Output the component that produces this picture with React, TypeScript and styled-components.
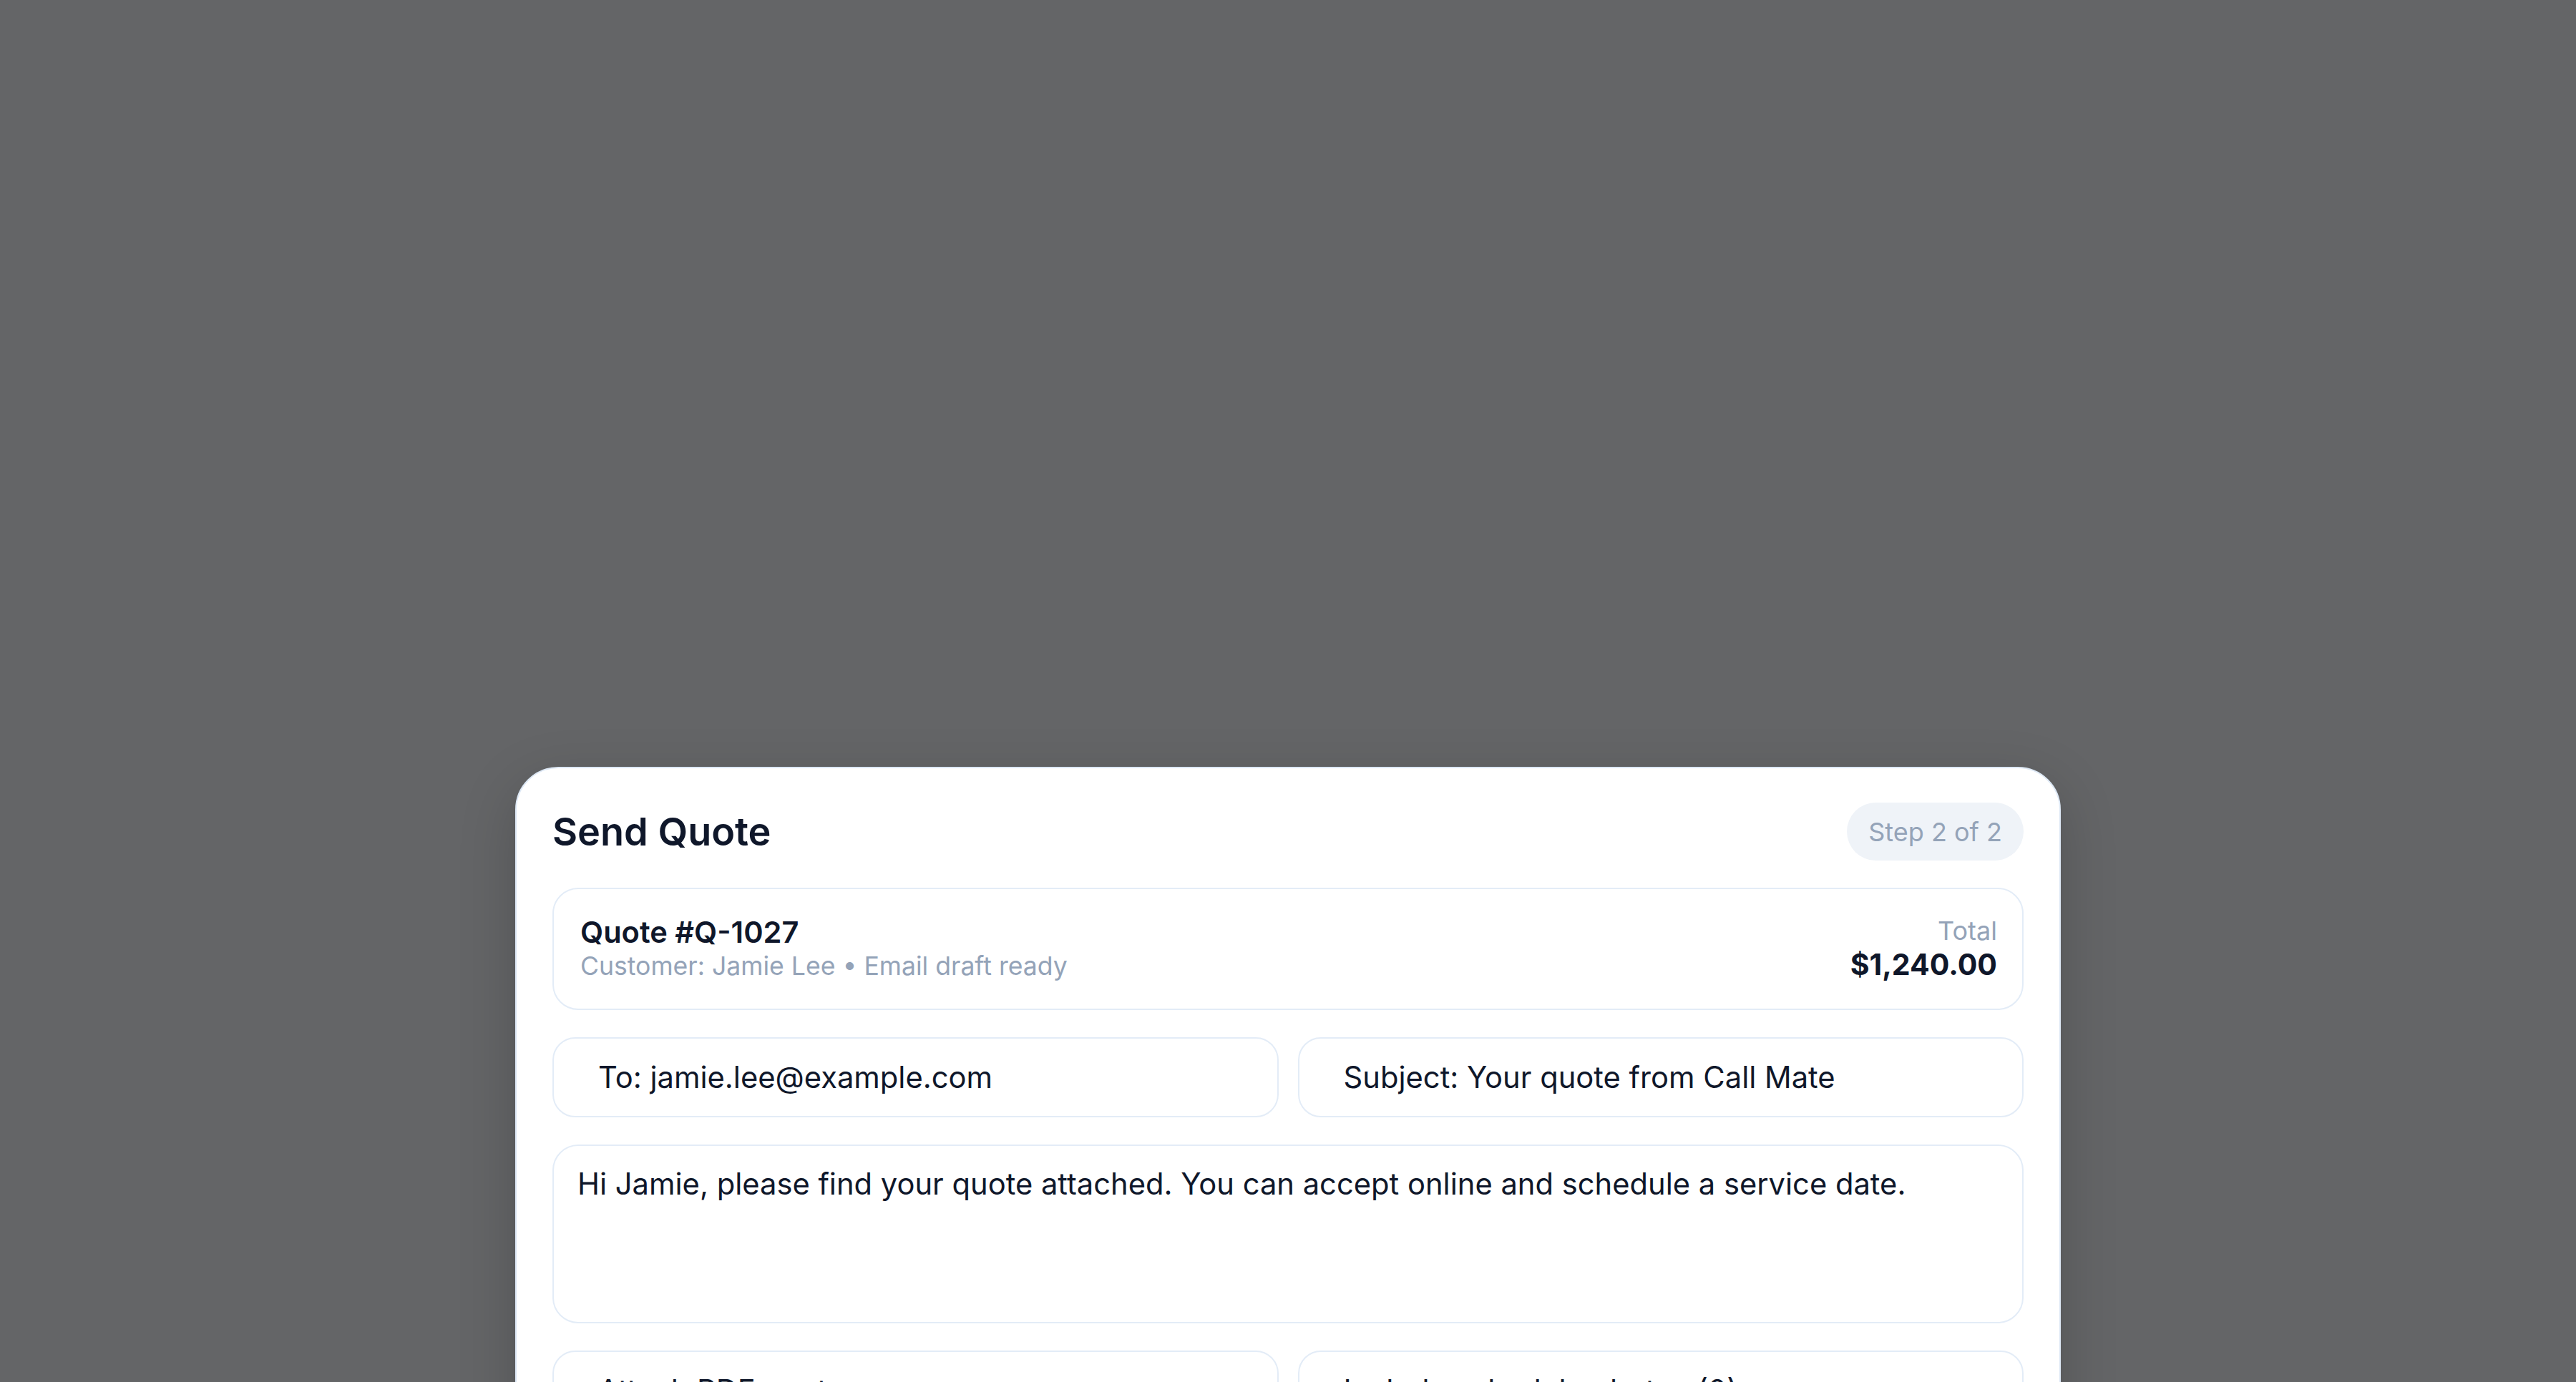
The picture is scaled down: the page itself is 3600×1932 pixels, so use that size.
import React from "react";
import styled, { createGlobalStyle } from "styled-components";

const GlobalStyle = createGlobalStyle`
  html, body {
    margin: 0;
    padding: 0;
    background: #646567;
  }
  body {
    font-family: Inter, "Noto Sans", "Liberation Sans", sans-serif;
    -webkit-font-smoothing: antialiased;
  }
  * { box-sizing: border-box; }
`;

const Backdrop = styled.div`
  height: 1932px;
  overflow: hidden;
  background: #646567;
  display: flex;
  justify-content: center;
  align-items: flex-start;
  padding-top: 1072px;
`;

const Sheet = styled.section`
  width: 2160px;
  flex: none;
  background: #ffffff;
  border: 2px solid #dde8f5;
  border-radius: 60px 60px 0 0;
  padding: 48px 50px 60px;
  display: flex;
  flex-direction: column;
  gap: 38px;
  box-shadow: 0 24px 80px rgba(0, 0, 0, 0.18);

  & > * {
    flex-shrink: 0;
  }
`;

const Header = styled.header`
  display: flex;
  align-items: center;
  justify-content: space-between;
`;

const Title = styled.h1`
  margin: 0;
  font-size: 54px;
  line-height: 62px;
  font-weight: 600;
  color: #0f172a;
`;

const StepPill = styled.span`
  height: 81px;
  padding: 0 30px;
  border-radius: 999px;
  background: #eff3f8;
  color: #94a3b8;
  font-size: 36px;
  display: inline-flex;
  align-items: center;
`;

const SummaryCard = styled.div`
  height: 171px;
  border: 2px solid #e3ecf7;
  border-radius: 36px;
  padding: 0 35px 0 37px;
  display: flex;
  align-items: center;
  justify-content: space-between;
`;

const SummaryBlock = styled.div<{ $align?: "left" | "right" }>`
  display: flex;
  flex-direction: column;
  align-items: ${(p) => (p.$align === "right" ? "flex-end" : "flex-start")};
`;

const QuoteId = styled.div`
  font-size: 41.6px;
  line-height: 48px;
  font-weight: 600;
  color: #0f172a;
`;

const Muted = styled.div<{ $size: number; $lh: number; $mt?: number }>`
  font-size: ${(p) => p.$size}px;
  line-height: ${(p) => p.$lh}px;
  margin-top: ${(p) => p.$mt ?? 0}px;
  color: #94a3b8;
`;

const Amount = styled.div`
  font-size: 41px;
  line-height: 52px;
  font-weight: 700;
  color: #0f172a;
`;

const FieldRow = styled.div`
  display: grid;
  grid-template-columns: 1fr 1fr;
  gap: 27px;
`;

const Field = styled.div`
  height: 112px;
  border: 2px solid #e3ecf7;
  border-radius: 32px;
  padding: 0 40px 0 62px;
  display: flex;
  align-items: center;
  font-size: 41.7px;
  color: #0f172a;
  white-space: nowrap;
  overflow: hidden;
`;

const MessageBox = styled.div`
  height: 250px;
  border: 2px solid #e3ecf7;
  border-radius: 36px;
  padding: 22px 33px;
  font-size: 41.7px;
  line-height: 62px;
  color: #0f172a;
`;

export default function App() {
  return (
    <>
      <GlobalStyle />
      <Backdrop>
        <Sheet>
          <Header>
            <Title>Send Quote</Title>
            <StepPill>Step 2 of 2</StepPill>
          </Header>

          <SummaryCard>
            <SummaryBlock>
              <QuoteId>Quote #Q-1027</QuoteId>
              <Muted $size={35.6} $lh={46} $mt={1}>
                Customer: Jamie Lee • Email draft ready
              </Muted>
            </SummaryBlock>
            <SummaryBlock $align="right">
              <Muted $size={36} $lh={42}>
                Total
              </Muted>
              <Amount>$1,240.00</Amount>
            </SummaryBlock>
          </SummaryCard>

          <FieldRow>
            <Field>To: jamie.lee@example.com</Field>
            <Field>Subject: Your quote from Call Mate</Field>
          </FieldRow>

          <MessageBox>
            Hi Jamie, please find your quote attached. You can accept online and schedule a service date.
          </MessageBox>

          <FieldRow>
            <Field>Attach PDF quote</Field>
            <Field>Include schedule photos (0)</Field>
          </FieldRow>
        </Sheet>
      </Backdrop>
    </>
  );
}
